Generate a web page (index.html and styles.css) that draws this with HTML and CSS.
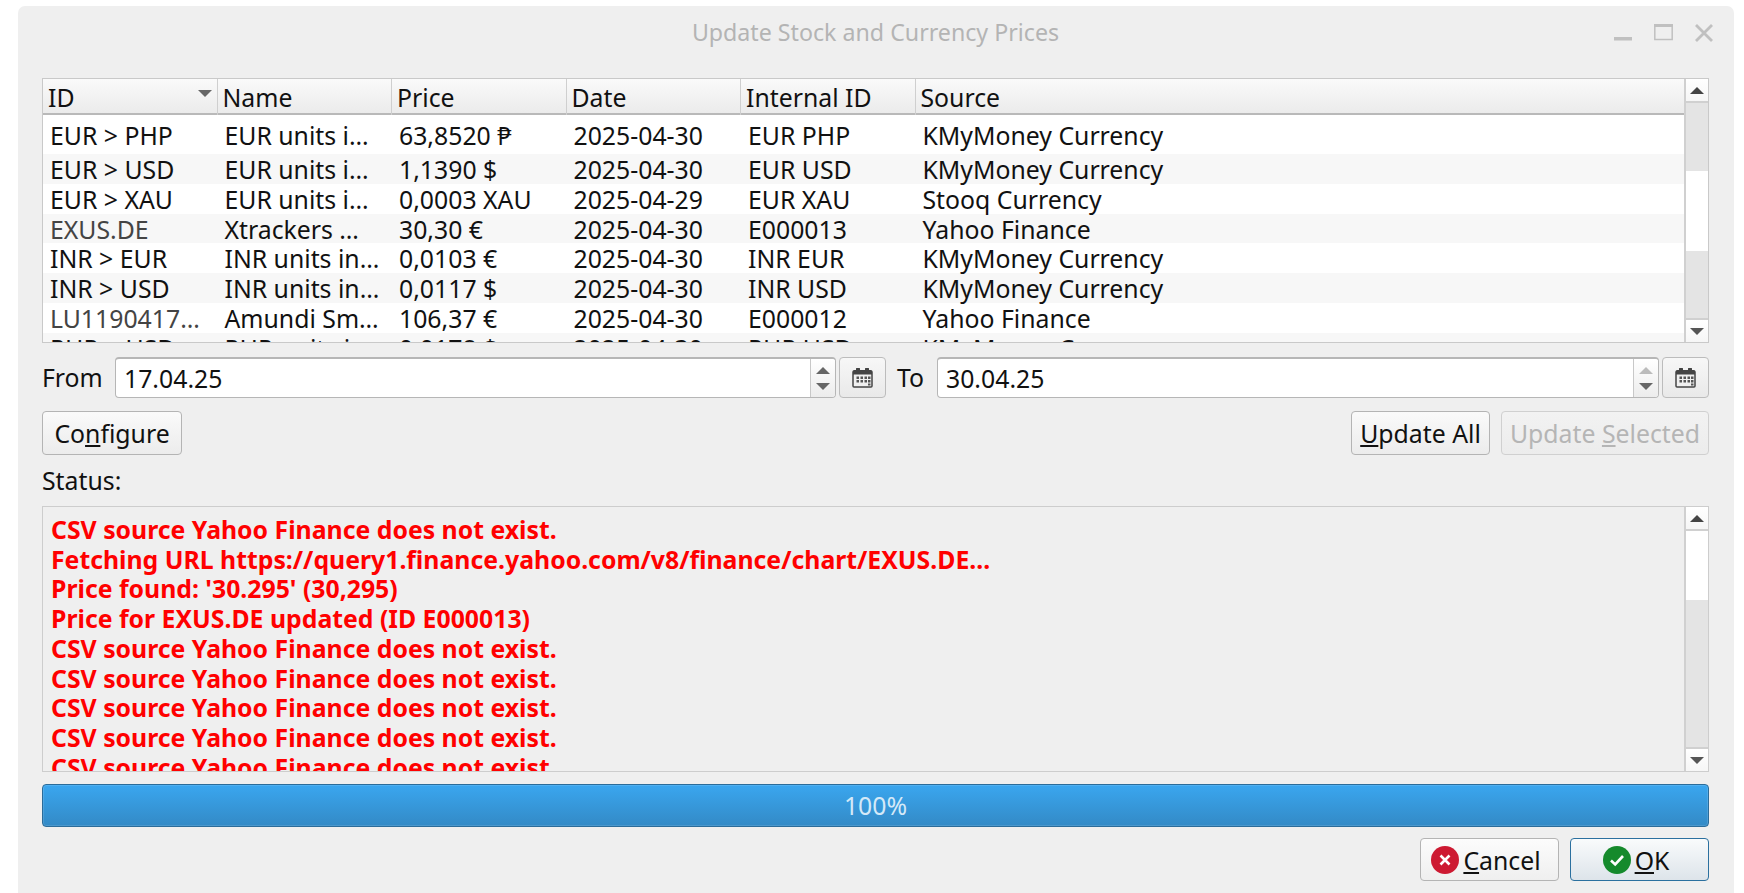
FILE: index.html
```html
<!DOCTYPE html>
<html lang="en">
<head>
<meta charset="utf-8">
<title>Update Stock and Currency Prices</title>
<link rel="stylesheet" href="styles.css">
</head>
<body>
<svg class="defs" width="0" height="0" aria-hidden="true">
  <symbol id="cal" viewBox="0 0 21 20">
    <rect x="1" y="3" width="19" height="16" rx="1" fill="#f0f0f0" stroke="#444" stroke-width="1.500"/>
    <path d="M1 6.500V3.500Q1 2 2.500 2H4V0.500Q4 0 4.500 0H7.500Q8 0 8 0.500V2H13V0.500Q13 0 13.500 0H16.500Q17 0 17 0.500V2H18.500Q20 2 20 3.500V6.500Z" fill="#444"/>
    <path d="M4.500 8.500h2.500v2.500H4.500zM8.500 8.500h2.500v2.500H8.500zM12.500 8.500h2.500v2.500H12.500zM16 8.500h2.500v2.500H16zM4.500 12h2.500v2.500H4.500zM8.500 12h2.500v2.500H8.500zM12.500 12h2.500v2.500H12.500zM16 12h2.500v2.500H16zM16 15.500h2.500v2H16z" fill="#555"/>
  </symbol>
</svg>
<main class="window">
  <header class="titlebar">
    <h1 class="title">Update Stock and Currency Prices</h1>
    <div class="wm-buttons">
      <svg class="wm" width="18" height="18" viewBox="0 0 18 18"><rect x="0" y="13" width="18" height="3.500" fill="#c0c0c0"/></svg>
      <svg class="wm" width="19" height="18" viewBox="0 0 19 18"><rect x="0.800" y="1" width="17.400" height="14.500" fill="none" stroke="#c0c0c0" stroke-width="1.500"/><rect x="0" y="0" width="19" height="3" fill="#c0c0c0"/></svg>
      <svg class="wm" width="18" height="18" viewBox="0 0 18 18"><path d="M1 1l16 16M17 1L1 17" stroke="#c0c0c0" stroke-width="2.800" fill="none"/></svg>
    </div>
  </header>

  <section class="table-box">
    <div class="table-main">
      <div class="thead">
        <div class="th">ID<span class="sort"></span></div>
        <div class="th">Name</div>
        <div class="th">Price</div>
        <div class="th">Date</div>
        <div class="th">Internal ID</div>
        <div class="th th-last">Source</div>
      </div>
      <div class="tbody">
        <div class="tr tr-first"><span>EUR &gt; PHP</span><span>EUR units i…</span><span>63,8520 ₱</span><span>2025-04-30</span><span>EUR PHP</span><span>KMyMoney Currency</span></div>
        <div class="tr alt"><span>EUR &gt; USD</span><span>EUR units i…</span><span>1,1390 $</span><span>2025-04-30</span><span>EUR USD</span><span>KMyMoney Currency</span></div>
        <div class="tr"><span>EUR &gt; XAU</span><span>EUR units i…</span><span>0,0003 XAU</span><span>2025-04-29</span><span>EUR XAU</span><span>Stooq Currency</span></div>
        <div class="tr alt"><span class="muted">EXUS.DE</span><span>Xtrackers …</span><span>30,30 €</span><span>2025-04-30</span><span>E000013</span><span>Yahoo Finance</span></div>
        <div class="tr"><span>INR &gt; EUR</span><span>INR units in…</span><span>0,0103 €</span><span>2025-04-30</span><span>INR EUR</span><span>KMyMoney Currency</span></div>
        <div class="tr alt"><span>INR &gt; USD</span><span>INR units in…</span><span>0,0117 $</span><span>2025-04-30</span><span>INR USD</span><span>KMyMoney Currency</span></div>
        <div class="tr"><span class="muted">LU1190417…</span><span>Amundi Sm…</span><span>106,37 €</span><span>2025-04-30</span><span>E000012</span><span>Yahoo Finance</span></div>
        <div class="tr alt"><span>PHP &gt; USD</span><span>PHP units i…</span><span>0,0178 $</span><span>2025-04-30</span><span>PHP USD</span><span>KMyMoney Currency</span></div>
      </div>
    </div>
    <div class="scrollbar">
      <div class="sb-btn sb-up"><i class="arrow-up"></i></div>
      <div class="sb-track sb-a"></div>
      <div class="sb-thumb sb-b"></div>
      <div class="sb-track sb-grow"></div>
      <div class="sb-btn sb-down"><i class="arrow-down"></i></div>
    </div>
  </section>

  <section class="dates">
    <label class="lbl">From</label>
    <div class="date-input date-from">
      <span class="date-text">17.04.25</span>
      <div class="spin"><i class="arrow-up dark"></i><i class="arrow-down dark"></i></div>
    </div>
    <button class="cal-btn"><svg width="21" height="20"><use href="#cal"/></svg></button>
    <label class="lbl lbl-to">To</label>
    <div class="date-input">
      <span class="date-text">30.04.25</span>
      <div class="spin"><i class="arrow-up faint"></i><i class="arrow-down dark"></i></div>
    </div>
    <button class="cal-btn"><svg width="21" height="20"><use href="#cal"/></svg></button>
  </section>

  <section class="actions">
    <button class="btn btn-config">Co<u>n</u>figure</button>
    <div class="spacer"></div>
    <button class="btn btn-all"><u>U</u>pdate All</button>
    <button class="btn btn-sel" disabled>Update <u>S</u>elected</button>
  </section>

  <div class="status-label">Status:</div>

  <section class="log-box">
    <div class="log">
      <div>CSV source Yahoo Finance does not exist.</div>
      <div>Fetching URL https://query1.finance.yahoo.com/v8/finance/chart/EXUS.DE...</div>
      <div>Price found: '30.295' (30,295)</div>
      <div>Price for EXUS.DE updated (ID E000013)</div>
      <div>CSV source Yahoo Finance does not exist.</div>
      <div>CSV source Yahoo Finance does not exist.</div>
      <div>CSV source Yahoo Finance does not exist.</div>
      <div>CSV source Yahoo Finance does not exist.</div>
      <div>CSV source Yahoo Finance does not exist.</div>
    </div>
    <div class="scrollbar">
      <div class="sb-btn sb-up"><i class="arrow-up"></i></div>
      <div class="sb-thumb sb-c"></div>
      <div class="sb-track sb-grow"></div>
      <div class="sb-btn sb-down"><i class="arrow-down"></i></div>
    </div>
  </section>

  <div class="progress">100%</div>

  <footer class="footer">
    <button class="btn btn-foot">
      <svg width="28" height="28" viewBox="0 0 28 28"><circle cx="14" cy="14" r="14" fill="#cd1a32"/><path d="M9.500 9.500l9 9M18.500 9.500l-9 9" stroke="#fff" stroke-width="2.600" fill="none"/></svg>
      <span><u>C</u>ancel</span>
    </button>
    <button class="btn btn-foot btn-ok">
      <svg width="28" height="28" viewBox="0 0 28 28"><circle cx="14" cy="14" r="14" fill="#158a2c"/><path d="M8 14.500l4.200 4L20 10" stroke="#fff" stroke-width="2.600" fill="none"/></svg>
      <span><u>O</u>K</span>
    </button>
  </footer>
</main>
</body>
</html>
```

FILE: styles.css
```css
* { box-sizing: border-box; }
html, body { margin: 0; height: 100%; overflow: hidden; background: #fff; }
body { padding: 6px 10px 0 18px; font-family: "Noto Sans", sans-serif; font-size: 24.8px; color: #111; }
.defs { position: absolute; }

.window { width: 1716px; height: 887px; background: #efefef; border-radius: 7px 7px 0 0; padding: 0 25px 0 24px; display: flex; flex-direction: column; }

.titlebar { height: 72px; flex: none; display: flex; align-items: flex-start; position: relative; }
.title { margin: 13px 0 0; width: 100%; text-align: center; font-size: 23.2px; line-height: 26px; font-weight: 400; color: #b4b4b4; }
.wm-buttons { position: absolute; right: -4px; top: 18px; display: flex; gap: 22px; }
.wm { display: block; }

.table-box { height: 265px; flex: none; display: flex; border: 1px solid #c9c9c9; background: #fff; }
.table-main { flex: 1; min-width: 0; display: flex; flex-direction: column; overflow: hidden; }
.thead { height: 36px; flex: none; display: grid; grid-template-columns: repeat(5, 174.500px) 1fr; border-bottom: 2px solid #b9b9b9; background: linear-gradient(#fafafa, #ebebeb); }
.th { padding: 0 0 0 5px; line-height: 36px; border-right: 1px solid #cfcfcf; position: relative; white-space: nowrap; }
.th-last { border-right: 0; }
.sort { position: absolute; right: 5px; top: 11px; border-left: 7px solid transparent; border-right: 7px solid transparent; border-top: 7px solid #666; }
.tbody { flex: 1; overflow: hidden; }
.tr { height: 29.75px; display: grid; grid-template-columns: repeat(5, 174.500px) 1fr; line-height: 30.500px; white-space: nowrap; }
.tr > span { padding-left: 7px; }
.tr-first { height: 39px; line-height: 41.500px; }
.alt { background: #f7f7f7; }
.muted { color: #444; }

.scrollbar { width: 24px; flex: none; display: flex; flex-direction: column; border-left: 2px solid #d0d0d0; background: #fff; }
.sb-btn { height: 24px; flex: none; display: flex; align-items: center; justify-content: center; background: linear-gradient(#fff, #f6f6f6); }
.sb-up { border-bottom: 2px solid #d0d0d0; }
.sb-down { border-top: 2px solid #d0d0d0; }
.sb-track { background: #e4e4e4; }
.sb-a { height: 68px; flex: none; }
.sb-thumb { background: #fff; flex: none; }
.sb-b { height: 80px; }
.sb-c { height: 69px; }
.sb-grow { flex: 1; }
.arrow-up, .arrow-down { display: block; width: 0; height: 0; border-left: 7px solid transparent; border-right: 7px solid transparent; }
.arrow-up { border-bottom: 7px solid #444; }
.arrow-down { border-top: 7px solid #555; }
.arrow-up.dark, .arrow-down.dark { border-left-width: 7px; border-right-width: 7px; }
.arrow-up.dark { border-bottom-color: #666; }
.arrow-down.dark { border-top-color: #666; }
.arrow-up.faint { border-left-width: 7px; border-right-width: 7px; border-bottom-color: #bbb; }

.dates { margin-top: 14px; height: 41px; flex: none; display: flex; align-items: stretch; }
.lbl { width: 73px; flex: none; line-height: 40px; }
.lbl-to { width: 51px; padding-left: 11px; }
.date-input { flex: 1; min-width: 0; display: flex; border: 1px solid #b6b6b6; border-top-width: 2px; border-radius: 4px; background: #fff; }
.date-from { flex: 0 0 721px; }
.date-text { flex: 1; padding-left: 8px; line-height: 38px; }
.spin { width: 25px; flex: none; border-left: 1px solid #c8c8c8; background: linear-gradient(#fff, #ececec); display: flex; flex-direction: column; align-items: center; justify-content: center; gap: 9px; border-radius: 0 3px 3px 0; }
.cal-btn { width: 47px; margin-left: 3px; flex: none; padding: 0; display: flex; align-items: center; justify-content: center; border: 1px solid #bcbcbc; border-radius: 4px; background: linear-gradient(#f7f7f7, #e9e9e9); }

.actions { margin-top: 13px; height: 44px; flex: none; display: flex; gap: 11px; }
.spacer { flex: 1; }
.btn { font: inherit; color: #111; padding: 0; border: 1px solid #b4b4b4; border-radius: 4px; background: linear-gradient(#fafafa, #ececec); white-space: nowrap; }
.btn-config { width: 140px; }
.btn-all { width: 139px; }
.btn-sel { width: 208px; color: #b5b5b5; border-color: #d0d0d0; background: linear-gradient(#f2f2f2, #ececec); }

.status-label { height: 51px; flex: none; line-height: 50px; }

.log-box { height: 266px; flex: none; display: flex; border: 1px solid #cdcdcd; overflow: hidden; }
.log { flex: 1; min-width: 0; padding: 8px 0 0 8px; font-weight: 700; color: #f00; line-height: 29.7px; overflow: hidden; }

.progress { margin-top: 12px; height: 43px; flex: none; text-align: center; line-height: 41px; color: #d4e9f8; border: 1px solid #2b6c9a; border-radius: 4px; background: linear-gradient(#3aa6ef, #338ac6); box-shadow: inset 0 0 0 1px rgba(255,255,255,.12); }

.footer { margin-top: 11px; height: 43px; flex: none; display: flex; justify-content: flex-end; gap: 11px; }
.btn-foot { width: 139px; padding-right: 7px; display: flex; align-items: center; justify-content: center; gap: 4px; background: linear-gradient(#fcfcfc, #efefef); }
.btn-ok { border-color: #2b709f; background: linear-gradient(#f9fbfc, #dde4ea); }
```
